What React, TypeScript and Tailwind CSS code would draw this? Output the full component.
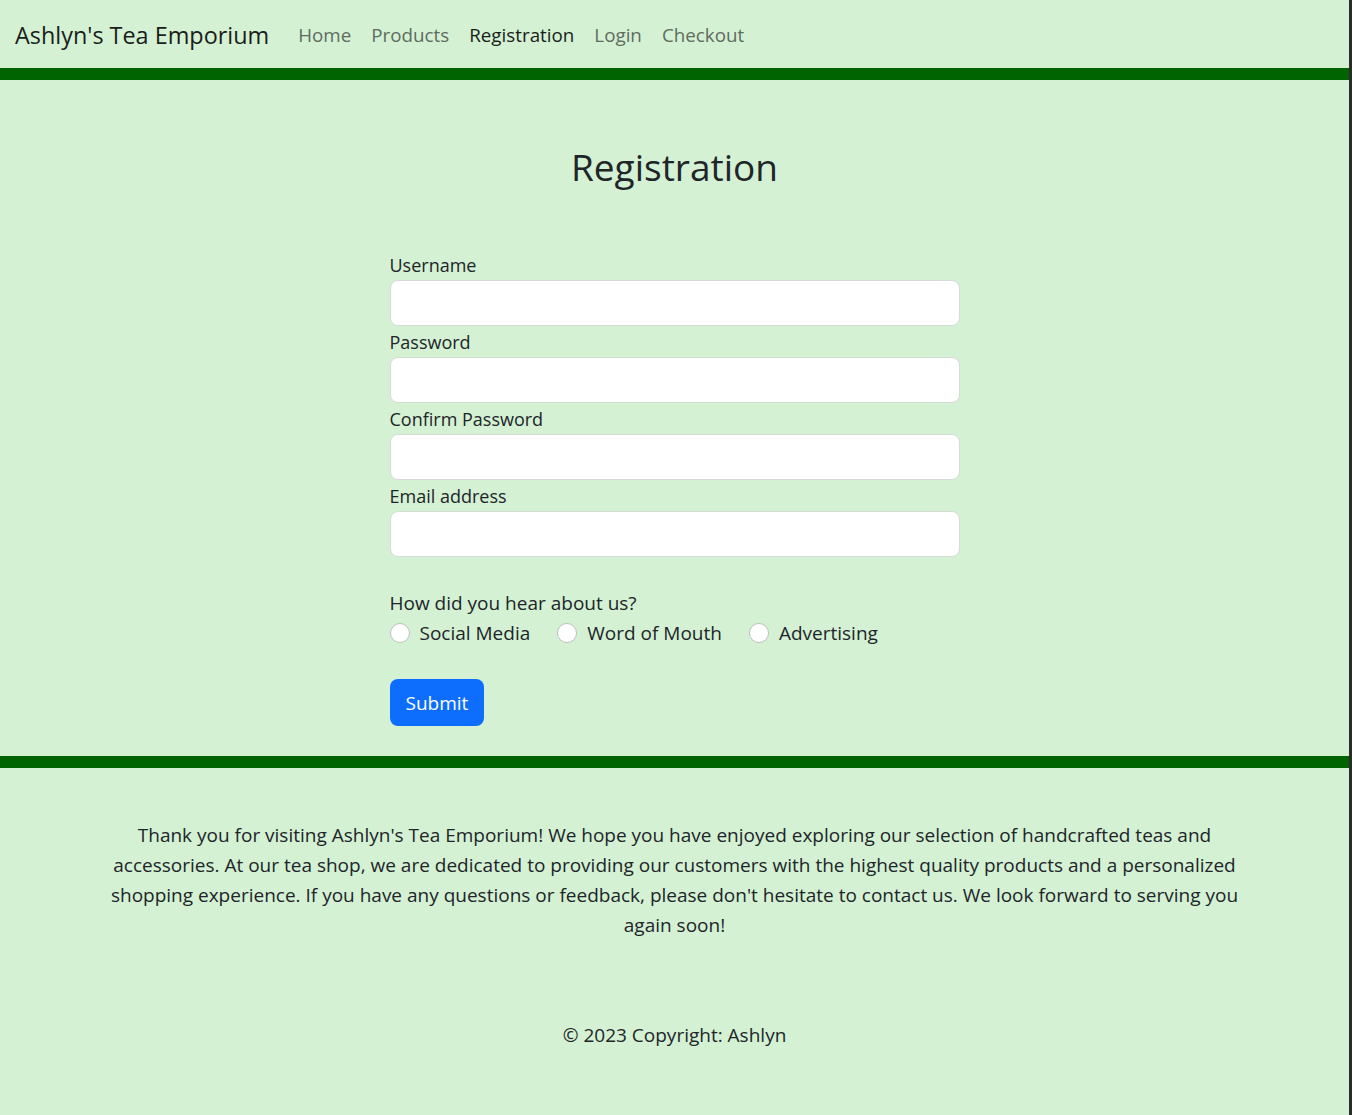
import React from "react";

const font = "font-['Open_Sans',sans-serif]";

function Field({ label }: { label: string }) {
  return (
    <div className="flex flex-col">
      <label className="text-[18px] leading-6 text-[#212529] mb-[3px]">{label}</label>
      <input
        type="text"
        className="h-[46px] w-full rounded-lg border border-[#d6dbd6] bg-white px-4 outline-none"
      />
    </div>
  );
}

function Radio({ label }: { label: string }) {
  return (
    <label className="flex items-center">
      <span className="inline-block h-5 w-5 rounded-full border border-[#bfbfbf] bg-white" />
      <span className="ml-[10px] text-[19px] leading-[30px] text-[#212529]">{label}</span>
    </label>
  );
}

export default function App() {
  return (
    <div className={`flex min-h-[1115px] w-full ${font}`}>
      <div className="flex flex-1 flex-col bg-[#d4f1d4]">
        {/* Navbar */}
        <nav className="flex h-[68px] items-center pl-[15px] pt-[2px]">
          <span className="text-[23.4px] leading-8 text-[#1a1d1a]">Ashlyn's Tea Emporium</span>
          <ul className="ml-[29px] flex items-center gap-[20px] text-[18.8px] leading-[30px]">
            <li className="text-[#5f6c5f]">Home</li>
            <li className="text-[#5f6c5f]">Products</li>
            <li className="text-[#1a1d1a]">Registration</li>
            <li className="text-[#5f6c5f]">Login</li>
            <li className="text-[#5f6c5f]">Checkout</li>
          </ul>
        </nav>
        <div className="h-3 w-full bg-[#006400]" />

        {/* Main */}
        <main className="flex flex-col items-center pt-[63px]">
          <h1 className="text-[37px] leading-[48px] text-[#212529]">Registration</h1>
          <form className="mt-[62px] flex w-[570px] flex-col">
            <div className="flex flex-col gap-1">
              <Field label="Username" />
              <Field label="Password" />
              <Field label="Confirm Password" />
              <Field label="Email address" />
            </div>
            <p className="mt-[31px] text-[19px] leading-[30px] text-[#212529]">How did you hear about us?</p>
            <div className="flex items-center gap-[27px]">
              <Radio label="Social Media" />
              <Radio label="Word of Mouth" />
              <Radio label="Advertising" />
            </div>
            <div className="mt-[31px]">
              <button
                type="button"
                className="h-[47px] rounded-lg bg-[#0d6efd] px-4 text-[19px] leading-[30px] text-white"
              >
                Submit
              </button>
            </div>
          </form>
        </main>
        <div className="mt-[30px] h-3 w-full bg-[#006400]" />

        {/* Footer */}
        <footer className="flex flex-col items-center pt-[52px] text-[19px] leading-[30px] text-[#212529]">
          <p className="text-center">
            Thank you for visiting Ashlyn's Tea Emporium! We hope you have enjoyed exploring our selection of handcrafted teas and
            <br />
            accessories. At our tea shop, we are dedicated to providing our customers with the highest quality products and a personalized
            <br />
            shopping experience. If you have any questions or feedback, please don't hesitate to contact us. We look forward to serving you
            <br />
            again soon!
          </p>
          <p className="mt-[80px] text-center">© 2023 Copyright: Ashlyn</p>
        </footer>
      </div>
      <div className="w-[3px] bg-[#2b2b2b]" />
    </div>
  );
}
